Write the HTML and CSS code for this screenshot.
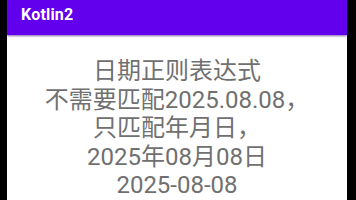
FILE: index.html
```
<!DOCTYPE html>
<html>
<head>
<meta charset="utf-8">
<link rel="stylesheet" href="styles.css">
</head>
<body>
<div class="screen">
  <header class="appbar"><span class="title">Kotlin2</span></header>
  <main class="content">
    <p class="message">日期正则表达式<br>不需要匹配2025.08.08，<br>只匹配年月日，<br>2025年08月08日<br>2025-08-08</p>
  </main>
</div>
</body>
</html>
```
FILE: styles.css
```
html, body {
  margin: 0;
  padding: 0;
  height: 200px;
  overflow: hidden;
  background: #000;
}
body {
  display: flex;
  padding-left: 7px;
  width: 340px;
}
.screen {
  width: 340px;
  height: 200px;
  background: #fff;
  display: flex;
  flex-direction: column;
}
.appbar {
  height: 35px;
  background: #6200ee;
  box-shadow: 0 1px 2px rgba(40, 0, 110, 0.6);
  display: flex;
  align-items: center;
  padding-left: 14px;
  padding-bottom: 6px;
  box-sizing: border-box;
}
.title {
  color: #fff;
  font-family: Roboto, "Liberation Sans", sans-serif;
  font-weight: 700;
  font-size: 16px;
  letter-spacing: 0.2px;
}
.content {
  padding-top: 22px;
}
.message {
  margin: 0;
  text-align: center;
  color: #707070;
  font-family: Roboto, "Noto Sans CJK SC", sans-serif;
  font-size: 24px;
  line-height: 28.5px;
}
```
